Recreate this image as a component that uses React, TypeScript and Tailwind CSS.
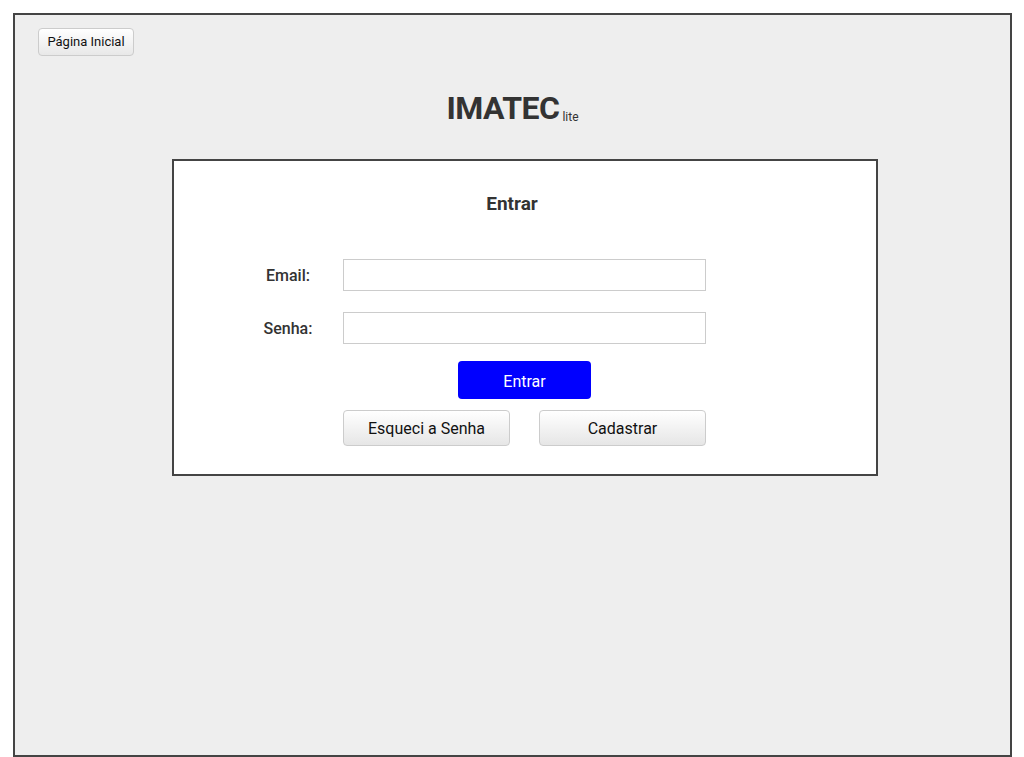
export default function App() {
  return (
    <div className="min-h-[757px] bg-white font-['Roboto',sans-serif] text-[#333]">
      <div className="ml-[13px] mt-[13px] flex h-[744px] w-[999px] flex-col border-2 border-[#444] bg-[#eee]">
        <div className="pl-[23px] pt-[13px]">
          <button className="h-[28px] w-[96px] rounded-[4px] border border-[#ccc] bg-gradient-to-b from-white to-[#e8e8e8] text-[13px] text-[#111]">
            Página Inicial
          </button>
        </div>

        <div className="mt-[32px] flex items-end justify-center">
          <span className="text-[32px] font-bold leading-[40px] tracking-[-0.5px]">IMATEC</span>
          <span className="mb-[4px] ml-[3px] text-[12px] leading-[14px]">lite</span>
        </div>

        <div className="ml-[157px] mt-[31px] flex w-[706px] flex-col border-2 border-[#444] bg-white pb-[28px]">
          <h1 className="pr-[26px] pt-[31px] text-center text-[19px] font-bold leading-[24px]">Entrar</h1>

          <div className="mt-[43px] flex flex-col gap-[21px] pl-[59px]">
            <div className="flex items-center">
              <label className="w-[110px] pt-[2px] text-center text-[16px] font-medium">Email:</label>
              <input className="h-[32px] w-[363px] border border-[#ccc] bg-white outline-none" />
            </div>
            <div className="flex items-center">
              <label className="w-[110px] pt-[2px] text-center text-[16px] font-medium">Senha:</label>
              <input type="password" className="h-[32px] w-[363px] border border-[#ccc] bg-white outline-none" />
            </div>
          </div>

          <div className="mt-[17px] pl-[284px]">
            <button className="h-[38px] w-[133px] rounded-[4px] bg-[#0000ff] pt-[3px] text-[16px] text-white">Entrar</button>
          </div>

          <div className="mt-[11px] flex gap-[29px] pl-[169px]">
            <button className="h-[36px] w-[167px] rounded-[4px] border border-[#ccc] bg-gradient-to-b from-white to-[#e6e6e6] pt-[2px] text-[16px] text-[#111]">
              Esqueci a Senha
            </button>
            <button className="h-[36px] w-[167px] rounded-[4px] border border-[#ccc] bg-gradient-to-b from-white to-[#e6e6e6] pt-[2px] text-[16px] text-[#111]">
              Cadastrar
            </button>
          </div>
        </div>
      </div>
    </div>
  );
}
